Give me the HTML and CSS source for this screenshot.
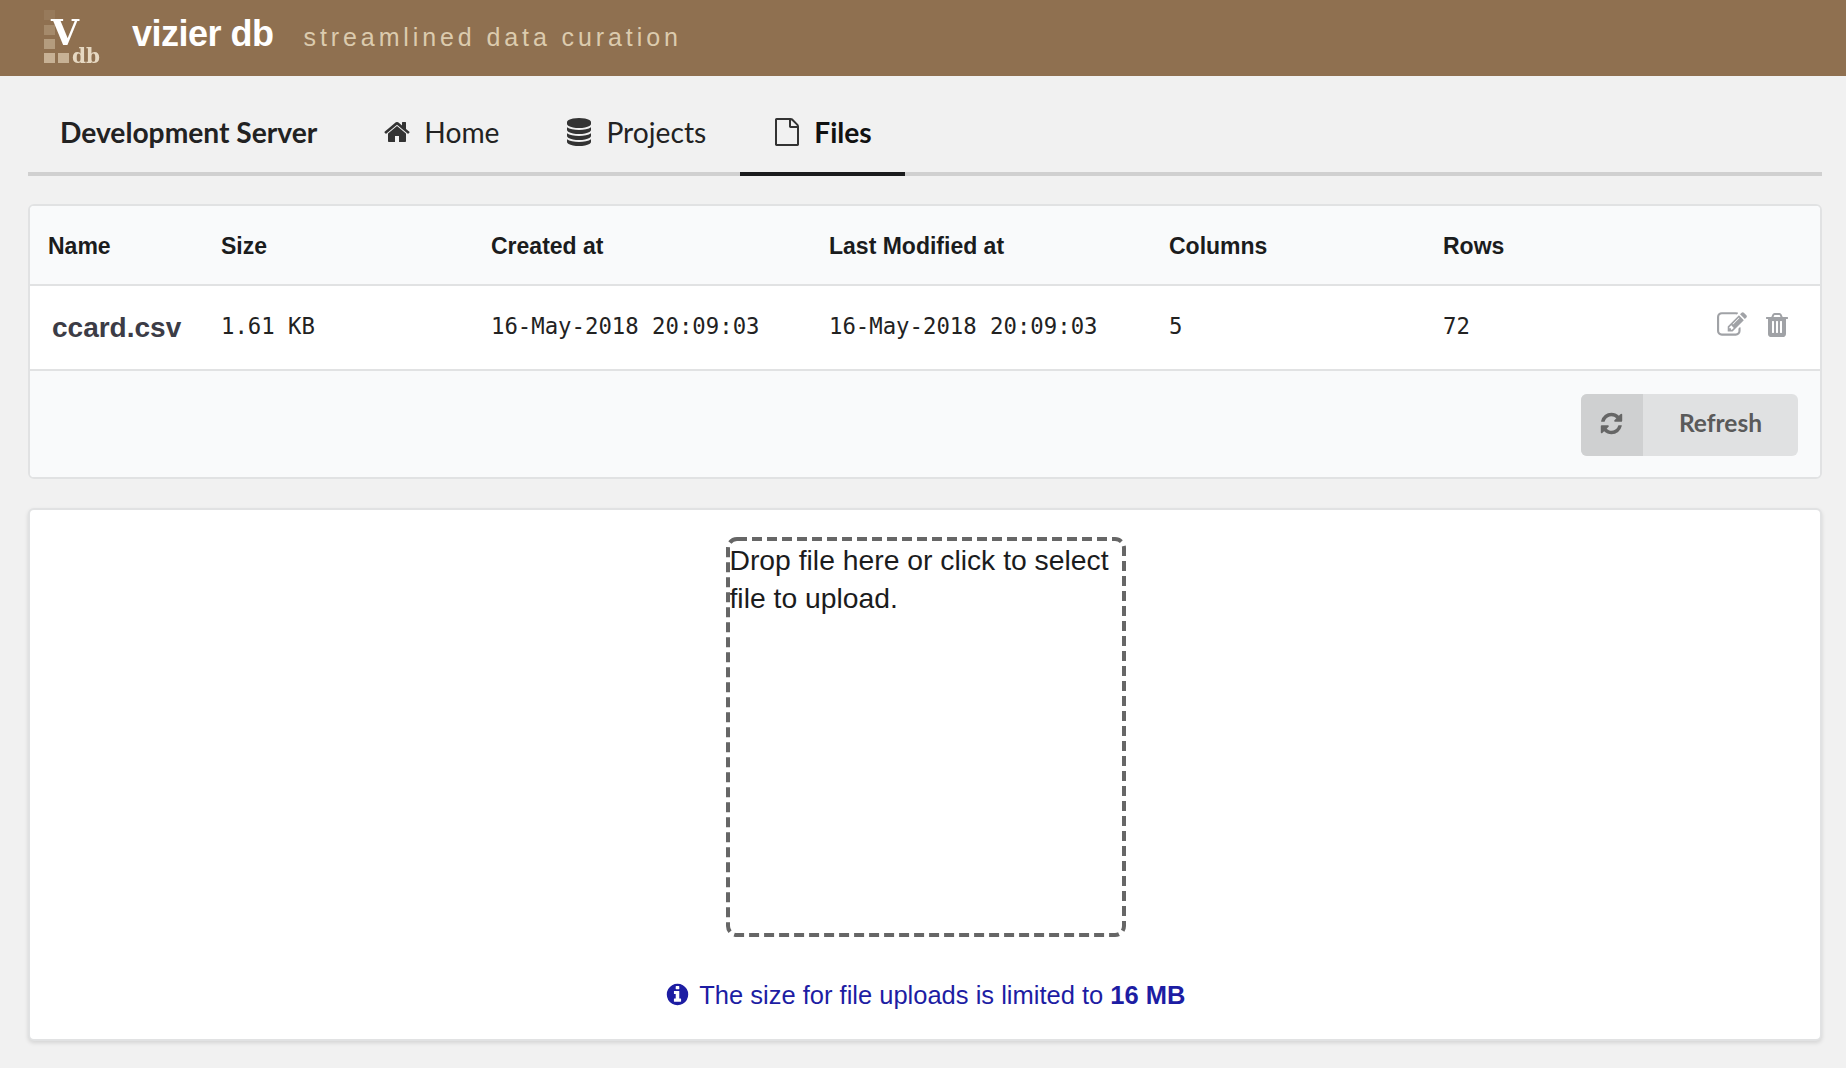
FILE: index.html
```html
<!DOCTYPE html>
<html lang="en">
<head>
    <meta charset="UTF-8">
    <meta name="viewport" content="width=device-width, initial-scale=1.0">
    <title>Vizier DB - Files</title>
    <link rel="stylesheet" href="styles.css">
</head>
<body>
    <header class="banner">
        <svg class="logo" viewBox="0 0 64 76" width="64" height="76" aria-label="Vizier DB logo">
            <g fill="#d9c7ac">
                <rect x="4" y="10" width="11" height="10" opacity="0.12"/>
                <rect x="4" y="25" width="11" height="10" opacity="0.3"/>
                <rect x="4" y="39" width="11" height="10" opacity="0.5"/>
                <rect x="4" y="53" width="11" height="10" opacity="0.75"/>
                <rect x="18" y="53" width="11" height="10" opacity="0.75"/>
            </g>
            <text class="logo-v" x="25" y="45">V</text>
            <text class="logo-db" x="32" y="63">db</text>
        </svg>
        <span class="brand">vizier db</span>
        <span class="tagline">streamlined data curation</span>
    </header>

    <main class="content">
        <nav class="tabs">
            <span class="tab tab-server">Development Server</span>
            <a class="tab">
                <svg class="tab-icon" viewBox="0 0 1792 1792"><path d="M1472 992v480q0 26-19 45t-45 19h-384v-384h-256v384h-384q-26 0-45-19t-19-45v-480q0-1 .5-3t.5-3l575-474 575 474q1 2 1 6zm223-69l-62 74q-8 9-21 11h-3q-13 0-21-7l-692-577-692 577q-12 8-24 7-13-2-21-11l-62-74q-8-10-7-23.500t11-21.500l719-599q32-26 76-26t76 26l244 204v-195q0-14 9-23t23-9h192q14 0 23 9t9 23v408l219 182q10 8 11 21.500t-7 23.500z"/></svg>
                Home
            </a>
            <a class="tab">
                <svg class="tab-icon" viewBox="0 0 1792 1792"><path d="M896 768q237 0 443-43t325-127v170q0 69-103 128t-280 93.500-385 34.500-385-34.500-280-93.500-103-128v-170q119 84 325 127t443 43zm0 768q237 0 443-43t325-127v170q0 69-103 128t-280 93.500-385 34.500-385-34.500-280-93.500-103-128v-170q119 84 325 127t443 43zm0-384q237 0 443-43t325-127v170q0 69-103 128t-280 93.500-385 34.500-385-34.500-280-93.500-103-128v-170q119 84 325 127t443 43zm0-1152q208 0 385 34.500t280 93.500 103 128v128q0 69-103 128t-280 93.500-385 34.500-385-34.500-280-93.500-103-128v-128q0-69 103-128t280-93.500 385-34.500z"/></svg>
                Projects
            </a>
            <a class="tab tab-active">
                <svg class="tab-icon" viewBox="0 0 1792 1792"><path d="M1596 380q28 28 48 76t20 88v1152q0 40-28 68t-68 28h-1344q-40 0-68-28t-28-68v-1600q0-40 28-68t68-28h896q40 0 88 20t76 48zm-444-244v376h376q-10-29-22-41l-313-313q-12-12-41-22zm384 1528v-1024h-416q-40 0-68-28t-28-68v-416h-768v1536h1280z"/></svg>
                Files
            </a>
        </nav>

        <section class="card">
            <table class="files">
                <thead>
                    <tr>
                        <th class="col-name">Name</th>
                        <th class="col-size">Size</th>
                        <th class="col-date">Created at</th>
                        <th class="col-modified">Last Modified at</th>
                        <th class="col-columns">Columns</th>
                        <th>Rows</th>
                        <th class="col-actions"></th>
                    </tr>
                </thead>
                <tbody>
                    <tr>
                        <td class="file-name">ccard.csv</td>
                        <td>1.61 KB</td>
                        <td>16-May-2018 20:09:03</td>
                        <td>16-May-2018 20:09:03</td>
                        <td>5</td>
                        <td>72</td>
                        <td class="actions">
                            <svg class="action-icon icon-edit" viewBox="0 0 1792 1792"><path d="M888 1184l116-116-152-152-116 116v56h96v96h56zm440-720q-16-16-33 1l-350 350q-17 17-1 33t33-1l350-350q17-17 1-33zm80 594v190q0 119-84.500 203.500t-203.500 84.500h-832q-119 0-203.500-84.500t-84.500-203.500v-832q0-119 84.500-203.500t203.500-84.500h832q63 0 117 25 15 7 18 23 3 17-9 29l-49 49q-14 14-32 8-23-6-45-6h-832q-66 0-113 47t-47 113v832q0 66 47 113t113 47h832q66 0 113-47t47-113v-126q0-13 9-22l64-64q15-15 35-7t20 29zm-96-738l288 288-672 672h-288v-288zm444 132l-92 92-288-288 92-92q28-28 68-28t68 28l152 152q28 28 28 68t-28 68z"/></svg>
                            <svg class="action-icon icon-trash" viewBox="0 0 1792 1792"><path d="M704 1376v-704q0-14-9-23t-23-9h-64q-14 0-23 9t-9 23v704q0 14 9 23t23 9h64q14 0 23-9t9-23zm256 0v-704q0-14-9-23t-23-9h-64q-14 0-23 9t-9 23v704q0 14 9 23t23 9h64q14 0 23-9t9-23zm256 0v-704q0-14-9-23t-23-9h-64q-14 0-23 9t-9 23v704q0 14 9 23t23 9h64q14 0 23-9t9-23zm-544-992h448l-48-117q-7-9-17-11h-317q-10 2-17 11zm928 32v64q0 14-9 23t-23 9h-96v948q0 83-47 143.500t-113 60.500h-832q-66 0-113-58.500t-47-141.500v-952h-96q-14 0-23-9t-9-23v-64q0-14 9-23t23-9h309l70-167q15-37 54-63t79-26h320q40 0 79 26t54 63l70 167h309q14 0 23 9t9 23z"/></svg>
                        </td>
                    </tr>
                </tbody>
            </table>
            <div class="card-footer">
                <button class="refresh">
                    <span class="refresh-icon">
                        <svg viewBox="0 0 1792 1792"><path d="M1639 1056q0 5-1 7-64 268-268 434.500t-478 166.500q-146 0-282.500-55t-243.500-157l-129 129q-19 19-45 19t-45-19-19-45v-448q0-26 19-45t45-19h448q26 0 45 19t19 45-19 45l-137 137q71 66 161 102t187 36q134 0 250-65t186-179q11-17 53-117 8-23 30-23h192q13 0 22.500 9.500t9.500 22.500zm25-800v448q0 26-19 45t-45 19h-448q-26 0-45-19t-19-45 19-45l138-138q-148-137-349-137-134 0-250 65t-186 179q-11 17-53 117-8 23-30 23h-199q-13 0-22.500-9.500t-9.500-22.500v-7q65-268 270-434.500t480-166.500q146 0 284 55.500t245 156.500l130-129q19-19 45-19t45 19 19 45z"/></svg>
                    </span>
                    <span class="refresh-label">Refresh</span>
                </button>
            </div>
        </section>

        <section class="card upload">
            <div class="dropzone">
                <svg class="dropzone-border" viewBox="0 0 400 400"><rect x="2" y="2" width="396" height="396" rx="9"/></svg>
                Drop file here or click to select file to upload.
            </div>
            <p class="upload-note">
                <svg class="note-icon" viewBox="0 0 1792 1792"><path d="M1152 1376v-160q0-14-9-23t-23-9h-96v-512q0-14-9-23t-23-9h-320q-14 0-23 9t-9 23v160q0 14 9 23t23 9h96v320h-96q-14 0-23 9t-9 23v160q0 14 9 23t23 9h448q14 0 23-9t9-23zm-128-896v-160q0-14-9-23t-23-9h-192q-14 0-23 9t-9 23v160q0 14 9 23t23 9h192q14 0 23-9t9-23zm640 416q0 209-103 385.500t-279.500 279.500-385.500 103-385.500-103-279.500-279.500-103-385.500 103-385.500 279.500-279.500 385.500-103 385.500 103 279.500 279.500 103 385.500z"/></svg>
                The size for file uploads is limited to <strong>16 MB</strong>
            </p>
        </section>
    </main>
</body>
</html>
```

FILE: styles.css
```css
html, body {
    margin: 0;
    padding: 0;
}
body {
    background-color: #f1f1f1;
    color: #1b1c1d;
    font-family: "Liberation Sans", Arial, sans-serif;
    min-height: 1068px;
}

.banner {
    display: flex;
    align-items: center;
    height: 76px;
    padding-left: 40px;
    background-color: #8f7050;
    overflow: hidden;
}
.logo {
    flex: none;
    overflow: visible;
    margin-right: 28px;
    filter: blur(0.6px);
}
.logo-v {
    font-family: "DejaVu Serif", serif;
    font-weight: bold;
    font-size: 36px;
    fill: #fff;
    text-anchor: middle;
}
.logo-db {
    font-family: "DejaVu Serif", serif;
    font-weight: bold;
    font-size: 20px;
    fill: #e6d8c2;
}
.brand {
    color: #fff;
    font-weight: bold;
    font-size: 36px;
    letter-spacing: -0.5px;
    margin-right: 30px;
    margin-bottom: 8px;
}
.tagline {
    color: #dccbae;
    font-size: 25px;
    letter-spacing: 3.9px;
    margin-bottom: 2px;
}

.content {
    padding: 0 24px 0 28px;
}

.tabs {
    display: flex;
    height: 96px;
    border-bottom: 4px solid #d0d0d0;
    font-family: Lato, sans-serif;
    font-size: 28.2px;
    color: #222;
    margin-bottom: 28px;
}
.tab {
    display: flex;
    align-items: center;
    padding: 16px 33px 0;
    margin-bottom: -4px;
    border-bottom: 4px solid transparent;
}
.tab-server {
    font-weight: bold;
    padding-left: 32px;
    padding-right: 33px;
}
.tab-active {
    font-weight: bold;
    color: #111;
    margin-left: 1px;
    border-bottom-color: #1b1c1d;
}
.tab-icon {
    width: 28px;
    height: 28px;
    margin-right: 13px;
    fill: #333;
}

.card {
    background-color: #fff;
    border: 2px solid #e1e2e3;
    border-radius: 6px;
    overflow: hidden;
}

.files {
    width: 100%;
    border-collapse: collapse;
    table-layout: fixed;
    font-size: 23px;
}
.files th {
    box-sizing: border-box;
    height: 79px;
    padding: 3px 0 0 18px;
    background-color: #f9fafb;
    border-bottom: 2px solid #e1e2e3;
    text-align: left;
    font-weight: bold;
}
.files td {
    box-sizing: border-box;
    height: 84px;
    padding: 0 0 3px 18px;
    font-family: "DejaVu Sans Mono", monospace;
    font-size: 22.3px;
    color: #222;
}
.col-name { width: 173px; }
.col-size { width: 270px; }
.col-date { width: 338px; }
.col-modified { width: 340px; }
.col-columns { width: 274px; }
.col-actions { width: 150px; }
.files td.file-name {
    font-family: "Liberation Sans", sans-serif;
    font-weight: bold;
    font-size: 28px;
    padding: 1px 0 0 22px;
    color: #3c3c46;
}
.files td.actions {
    text-align: right;
    padding-right: 29px;
    padding-bottom: 5px;
    white-space: nowrap;
}
.action-icon {
    fill: #a0a2a6;
    vertical-align: middle;
}
.icon-edit {
    width: 30px;
    height: 30px;
    margin-right: 3px;
}
.icon-trash {
    width: 28px;
    height: 28px;
}

.card-footer {
    display: flex;
    justify-content: flex-end;
    padding: 23px 22px 21px 23px;
    background-color: #f9fafb;
    border-top: 2px solid #e1e2e3;
}
.refresh {
    display: flex;
    align-items: stretch;
    padding: 0;
    height: 62px;
    border: 0;
    border-radius: 6px;
    overflow: hidden;
    background-color: #e0e1e2;
    color: #5a5a5a;
    font-family: Lato, sans-serif;
    font-weight: bold;
    font-size: 24.5px;
}
.refresh-icon {
    display: flex;
    align-items: center;
    justify-content: center;
    width: 62px;
    padding-bottom: 4px;
    background-color: #cfd0d1;
}
.refresh-icon svg {
    width: 25px;
    height: 25px;
    fill: #666;
}
.refresh-label {
    display: flex;
    align-items: center;
    padding: 0 36px 5px;
}

.upload {
    margin-top: 29px;
    height: 529px;
    box-shadow: 0 2px 4px rgba(0, 0, 0, 0.12);
    display: flex;
    flex-direction: column;
    align-items: center;
}
.dropzone {
    position: relative;
    box-sizing: border-box;
    width: 400px;
    height: 400px;
    margin-top: 27px;
    margin-left: 1px;
    padding: 4px;
    font-size: 28.3px;
    line-height: 38px;
    color: #1b1c1d;
}
.dropzone-border {
    position: absolute;
    top: 0;
    left: 0;
    width: 100%;
    height: 100%;
    fill: none;
    stroke: #666;
    stroke-width: 4;
    stroke-dasharray: 10 5;
}
.upload-note {
    margin: 44px 0 0;
    font-size: 25.5px;
    color: #1d1da3;
}
.note-icon {
    width: 25px;
    height: 25px;
    margin-right: 3px;
    fill: #1d1da3;
    vertical-align: -3px;
}
```
